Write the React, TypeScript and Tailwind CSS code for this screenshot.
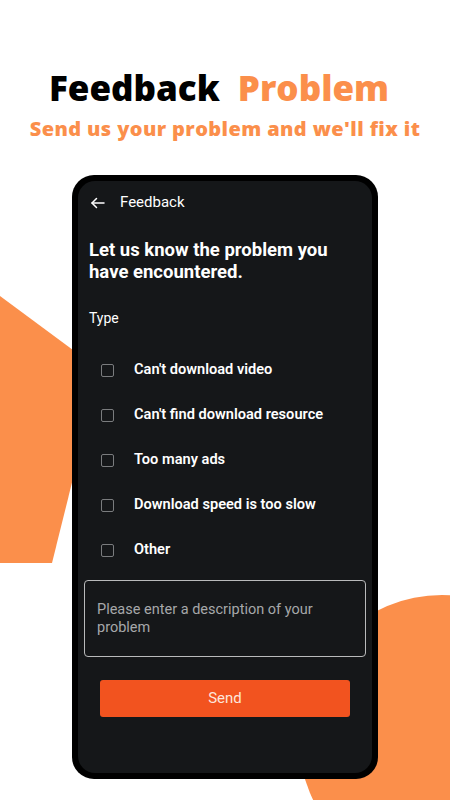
import React from 'react';

const options = [
  "Can't download video",
  "Can't find download resource",
  'Too many ads',
  'Download speed is too slow',
  'Other',
];

export default function App() {
  return (
    <div className="relative w-[450px] h-[800px] overflow-hidden bg-white">
      {/* background shapes */}
      <svg className="absolute left-0 top-0" width="450" height="800" viewBox="0 0 450 800">
        <polygon points="0,296 100,370 52,563 0,563" fill="#fb8f4b" />
        <circle cx="442" cy="738" r="143" fill="#fb8f4b" />
      </svg>

      <div className="relative flex flex-col items-center">
        <h1 className="mt-[65px] pr-[12px] text-[35px] leading-[46px] font-extrabold font-['Open_Sans',sans-serif]">
          <span className="text-black">Feedback</span>
          <span className="ml-[18px] text-[#fb8f4b]">Problem</span>
        </h1>
        <p className="mt-[4px] text-[20px] leading-[28px] font-extrabold tracking-[0.4px] text-[#fb8f4b] font-['Open_Sans',sans-serif]">
          Send us your problem and we'll fix it
        </p>

        <div className="mt-[32px] w-[306px] h-[604px] rounded-[22px] bg-black p-[6px]">
          <div className="h-full rounded-[17px] bg-[#151719] flex flex-col font-['Roboto',sans-serif] text-white">
            <div className="flex items-center h-[42px] pt-[1px] pl-[11px]">
              <svg width="18" height="18" viewBox="0 0 24 24" fill="none" stroke="white" strokeWidth="2" strokeLinecap="round" strokeLinejoin="round">
                <path d="M20 12H4" />
                <path d="M10 6l-6 6 6 6" />
              </svg>
              <span className="ml-[13px] text-[15px]">Feedback</span>
            </div>

            <p className="mt-[16px] px-[11px] text-[18.5px] leading-[22px] font-bold">
              Let us know the problem you have encountered.
            </p>

            <p className="mt-[25px] px-[11px] text-[14px] leading-[20px]">Type</p>

            <div className="mt-[33px] flex flex-col gap-[27px] pl-[23px]">
              {options.map((o) => (
                <div key={o} className="flex items-center h-[18px]">
                  <div className="w-[13px] h-[13px] rounded-[2px] border-[1.5px] border-[#7a7c7e]" />
                  <span className="ml-[20px] text-[14.6px] font-semibold">{o}</span>
                </div>
              ))}
            </div>

            <div className="mt-[21px] mx-[6px] h-[77px] rounded-[4px] border border-[#b9babb] px-[12px] pt-[20px]">
              <p className="text-[14.5px] leading-[18px] text-[#a6a8aa]">
                Please enter a description of your problem
              </p>
            </div>

            <button className="mt-[23px] mx-[22px] h-[37px] rounded-[3px] bg-[#f2531f] text-[15px] text-[#fde6dc]">
              Send
            </button>
          </div>
        </div>
      </div>
    </div>
  );
}
